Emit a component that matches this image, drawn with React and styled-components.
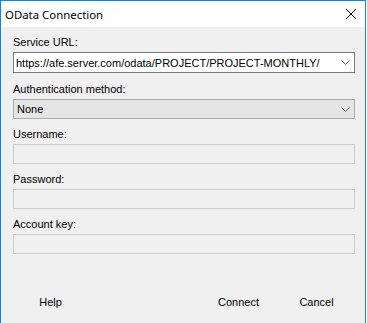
import React from 'react'
import styled, { createGlobalStyle } from 'styled-components'

const GlobalStyle = createGlobalStyle`
body {
  margin: 0;
  background: #ffffff;
  font-family: "Liberation Sans", Arial, sans-serif;
  overflow: hidden;
}
`

const Window = styled.div`
width: 364px;
height: 322px;
border: 1px solid #1a82d8;
border-bottom: none;
background: #f0f0f0;
display: flex;
flex-direction: column;
`

const TitleBar = styled.div`
height: 26px;
background: #ffffff;
display: flex;
align-items: center;
justify-content: space-between;
padding: 0 9px 0 4px;
`

const Title = styled.span`
font-family: "Noto Sans", "Open Sans", sans-serif;
font-size: 11.4px;
color: #000000;
`

const CloseButton = styled.svg`
width: 10px;
height: 10px;
`

const Content = styled.div`
display: flex;
flex-direction: column;
padding: 9px 10px 0 12px;
`

const Field = styled.div`
display: flex;
flex-direction: column;
margin-bottom: ${p => p.gap}px;
`

const Label = styled.label`
font-size: 11px;
line-height: 13px;
color: #000000;
margin-bottom: 3px;
`

const Combo = styled.div`
height: ${p => p.h}px;
box-sizing: border-box;
border: 1px solid ${p => (p.editable ? '#7a7a7a' : '#acacac')};
background: ${p => (p.editable ? '#ffffff' : '#e5e5e5')};
display: flex;
align-items: center;
justify-content: space-between;
padding: 0 4px 0 2px;
font-size: 11px;
color: #000000;
`

const ComboText = styled.span`
padding-left: ${p => (p.editable ? 0 : 1)}px;
`

const Chevron = styled.svg`
width: 9px;
height: 5px;
`

const TextBox = styled.div`
height: 20px;
box-sizing: border-box;
border: 1px solid #cccccc;
background: #f0f0f0;
`

const Footer = styled.div`
display: flex;
margin-top: 27px;
`

const Button = styled.div`
width: 75px;
height: 23px;
display: flex;
align-items: center;
justify-content: center;
font-size: 11px;
color: #000000;
margin-left: ${p => p.ml || 0}px;
`

const ChevronIcon = () => (
    <Chevron viewBox="0 0 9 5">
        <polyline points="0.5,0.5 4.5,4.5 8.5,0.5" fill="none" stroke="#555555" strokeWidth="1" />
    </Chevron>
)

const fields = ['Username:', 'Password:', 'Account key:']

const App = () => {
    return (
        <>
            <GlobalStyle />
            <Window>
                <TitleBar>
                    <Title>OData Connection</Title>
                    <CloseButton viewBox="0 0 10 10">
                        <line x1="0" y1="0" x2="10" y2="10" stroke="#000" strokeWidth="1" />
                        <line x1="10" y1="0" x2="0" y2="10" stroke="#000" strokeWidth="1" />
                    </CloseButton>
                </TitleBar>
                <Content>
                    <Field gap={10}>
                        <Label>Service URL:</Label>
                        <Combo editable h={21}>
                            <ComboText editable>https://afe.server.com/odata/PROJECT/PROJECT-MONTHLY/</ComboText>
                            <ChevronIcon />
                        </Combo>
                    </Field>
                    <Field gap={9}>
                        <Label>Authentication method:</Label>
                        <Combo h={20}>
                            <ComboText>None</ComboText>
                            <ChevronIcon />
                        </Combo>
                    </Field>
                    {fields.map(f => (
                        <Field gap={9} key={f}>
                            <Label>{f}</Label>
                            <TextBox />
                        </Field>
                    ))}
                    <Footer>
                        <Button>Help</Button>
                        <Button ml={113}>Connect</Button>
                        <Button ml={3}>Cancel</Button>
                    </Footer>
                </Content>
            </Window>
        </>
    )
}

export default App
